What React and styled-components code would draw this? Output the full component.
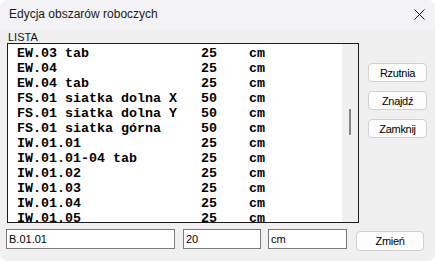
import React from 'react'
import styled, { createGlobalStyle } from 'styled-components'

const GlobalStyle = createGlobalStyle`
  html, body {
    margin: 0;
    padding: 0;
    background: #ffffff;
  }
  * {
    box-sizing: border-box;
  }
`

const rows = [
  { name: 'EW.03 tab', value: '25', unit: 'cm' },
  { name: 'EW.04', value: '25', unit: 'cm' },
  { name: 'EW.04 tab', value: '25', unit: 'cm' },
  { name: 'FS.01 siatka dolna X', value: '50', unit: 'cm' },
  { name: 'FS.01 siatka dolna Y', value: '50', unit: 'cm' },
  { name: 'FS.01 siatka górna', value: '50', unit: 'cm' },
  { name: 'IW.01.01', value: '25', unit: 'cm' },
  { name: 'IW.01.01-04 tab', value: '25', unit: 'cm' },
  { name: 'IW.01.02', value: '25', unit: 'cm' },
  { name: 'IW.01.03', value: '25', unit: 'cm' },
  { name: 'IW.01.04', value: '25', unit: 'cm' },
  { name: 'IW.01.05', value: '25', unit: 'cm' },
]

export default function App() {
  return (
    <>
      <GlobalStyle />
      <Window>
        {/* title bar */}
        <TitleBar>
          <Title>Edycja obszarów roboczych</Title>
          <CloseButton aria-label="close">
            <svg width="11" height="11" viewBox="0 0 11 11">
              <path d="M0.5 0.5 L10.5 10.5 M10.5 0.5 L0.5 10.5" stroke="#1b1b1b" strokeWidth="1" fill="none" />
            </svg>
          </CloseButton>
        </TitleBar>

        <Body>
          <Label>LISTA</Label>
          <MainRow>
            <ListBox>
              <ListItems>
                {rows.map((r) => (
                  <Row key={r.name}>
                    <Cell>{r.name}</Cell>
                    <Cell>{r.value}</Cell>
                    <Cell>{r.unit}</Cell>
                  </Row>
                ))}
              </ListItems>
              <ScrollTrack>
                <ScrollThumb />
              </ScrollTrack>
            </ListBox>

            <SideButtons>
              <Button>Rzutnia</Button>
              <Button>Znajdź</Button>
              <Button>Zamknij</Button>
            </SideButtons>
          </MainRow>

          {/* edit row */}
          <EditRow>
            <Field $w={169} defaultValue="B.01.01" />
            <Field $w={78} defaultValue="20" />
            <Field $w={79} defaultValue="cm" />
            <Button $w={68} $h={20} $top={2}>Zmień</Button>
          </EditRow>
        </Body>
      </Window>
    </>
  )
}

const Window = styled.div`
  width: 435px;
  height: 261px;
  background: #f0f0f0;
  border-radius: 8px;
  overflow: hidden;
  display: flex;
  flex-direction: column;
  font-family: "Liberation Sans", Arial, sans-serif;
  color: #000;
`

const TitleBar = styled.div`
  height: 30px;
  flex-shrink: 0;
  display: flex;
  align-items: center;
  justify-content: space-between;
  padding: 0 10px 2px 9px;
  background: #f3f3f5;
`

const Title = styled.div`
  font-size: 12px;
  color: #1a1a1a;
`

const CloseButton = styled.div`
  width: 11px;
  height: 11px;
  display: flex;
  svg {
    display: block;
  }
`

const Body = styled.div`
  padding: 1px 0 0 7px;
  display: flex;
  flex-direction: column;
`

const Label = styled.div`
  font-size: 11px;
  line-height: 12px;
  padding-left: 1px;
  color: #101030;
`

const MainRow = styled.div`
  display: flex;
  align-items: flex-start;
  gap: 9px;
`

const ListBox = styled.div`
  width: 352px;
  height: 180px;
  border: 1px solid #1c1c1c;
  background: #ffffff;
  display: flex;
  overflow: hidden;
`

const ListItems = styled.div`
  flex: 1;
  padding: 2px 0 0 9px;
  overflow: hidden;
`

const Row = styled.div`
  display: grid;
  grid-template-columns: 184px 48px 1fr;
  height: 15px;
  line-height: 15px;
  font-family: "Liberation Mono", "DejaVu Sans Mono", monospace;
  font-weight: bold;
  font-size: 13.33px;
  color: #000;
  white-space: pre;
`

const Cell = styled.span``

const ScrollTrack = styled.div`
  width: 16px;
  flex-shrink: 0;
  background: #f0f0f0;
  display: flex;
  justify-content: center;
  padding-top: 65px;
`

const ScrollThumb = styled.div`
  width: 2px;
  height: 26px;
  background: #868686;
`

const SideButtons = styled.div`
  display: flex;
  flex-direction: column;
  gap: 9px;
  padding-top: 20px;
`

const Button = styled.button`
  width: ${(p) => p.$w || 59}px;
  height: ${(p) => p.$h || 19}px;
  margin-top: ${(p) => p.$top || 0}px;
  padding: 0;
  background: #fdfdfd;
  border: 1px solid #d0d0d0;
  border-radius: 4px;
  font-family: "Liberation Sans", Arial, sans-serif;
  font-size: 11px;
  letter-spacing: -0.3px;
  color: #000;
`

const EditRow = styled.div`
  display: flex;
  align-items: flex-start;
  margin: 6px 0 0 -1px;
  gap: 8px;

  & > :nth-child(2) {
    margin-right: -1px;
  }
  & > :nth-child(3) {
    margin-right: 1px;
  }
`

const Field = styled.input`
  width: ${(p) => p.$w}px;
  height: 20px;
  border: 1px solid #7a7a7a;
  background: #ffffff;
  padding: 0 2px;
  font-family: "Liberation Sans", Arial, sans-serif;
  font-size: 11px;
  color: #000;
  outline: none;
`
